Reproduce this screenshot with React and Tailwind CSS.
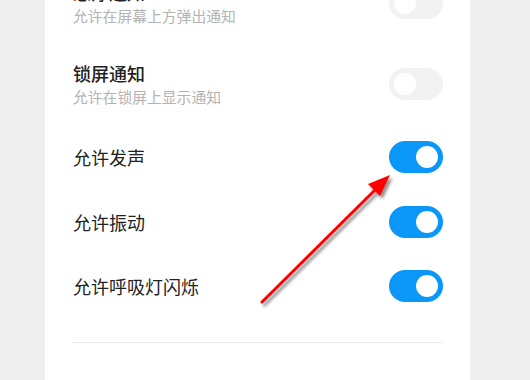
import React from 'react';

const FONT = { fontFamily: '"Noto Sans CJK SC", "Noto Sans", sans-serif' };

const ROWS = [
  { title: '悬浮通知', sub: '允许在屏幕上方弹出通知', on: false },
  { title: '锁屏通知', sub: '允许在锁屏上显示通知', on: false },
  { title: '允许发声', on: true },
  { title: '允许振动', on: true },
  { title: '允许呼吸灯闪烁', on: true },
];

const Toggle = ({ on }) => (
  <div
    className={`w-[54px] h-[32px] rounded-full flex items-center px-[5px] flex-shrink-0 ${
      on ? 'bg-[#0a97f7] justify-end' : 'bg-[#f2f2f2] justify-start'
    }`}
  >
    <div className="w-[22px] h-[22px] rounded-full bg-white" />
  </div>
);

const Arrow = () => (
  <svg className="absolute inset-0 pointer-events-none" width="530" height="380" viewBox="0 0 530 380">
    <defs>
      <filter id="shadow" x="-20%" y="-20%" width="140%" height="140%">
        <feDropShadow dx="2.5" dy="3" stdDeviation="1.6" floodColor="#000" floodOpacity="0.45" />
      </filter>
    </defs>
    <g filter="url(#shadow)">
      <line x1="262" y1="302" x2="376" y2="189" stroke="#ff0000" strokeWidth="3" strokeLinecap="round" />
      <polygon points="390,175 380,196 374,190 368,184" fill="#ff0000" />
    </g>
  </svg>
);

export default function App() {
  return (
    <div className="relative w-[530px] h-[380px] overflow-hidden bg-[#efefef]" style={FONT}>
      <div className="ml-[45px] w-[425px] h-full bg-white flex flex-col">
        <div className="-mt-[38px] pl-[28px] pr-[27px]">
          {ROWS.map((r) => (
            <div
              key={r.title}
              className={`flex items-center justify-between ${r.sub ? 'h-[81.5px]' : 'h-[64.5px]'}`}
            >
              <div>
                <div className={`text-[18px] leading-[24px] text-[#222] ${r.sub ? 'font-medium' : ''}`}>
                  {r.title}
                </div>
                {r.sub && (
                  <div className="mt-[2px] text-[14.8px] leading-[20px] text-[#b3b3b3]">{r.sub}</div>
                )}
              </div>
              <Toggle on={r.on} />
            </div>
          ))}
          <div className="mt-[23px] h-px bg-[#ebebeb]" />
        </div>
      </div>
      <Arrow />
    </div>
  );
}
